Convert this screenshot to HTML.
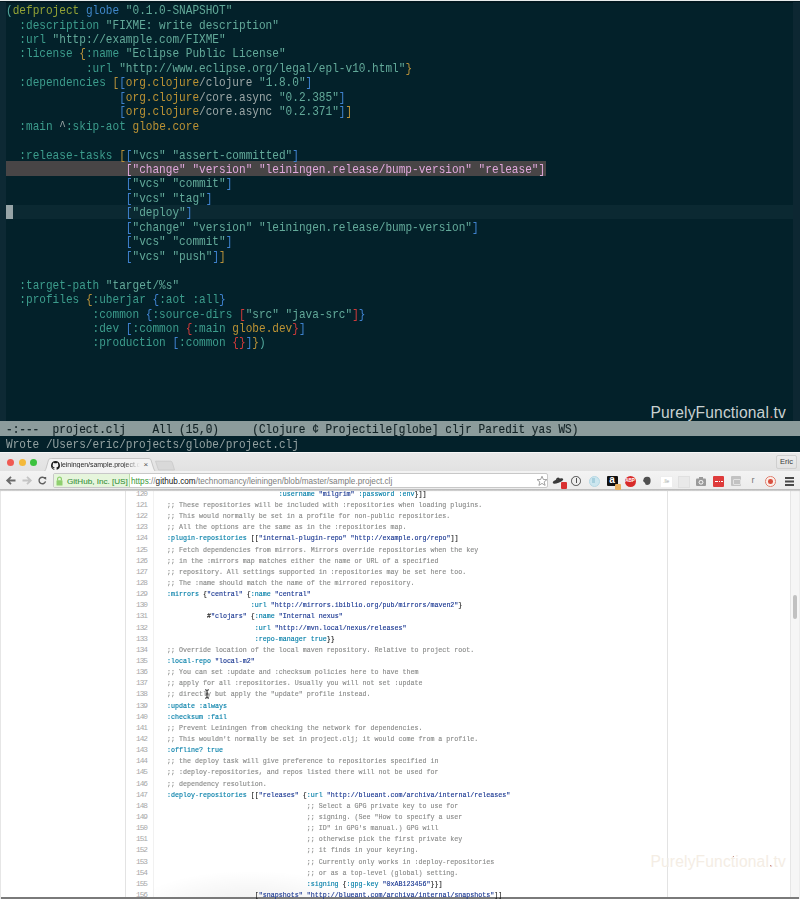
<!DOCTYPE html>
<html><head><meta charset="utf-8">
<style>
html,body{margin:0;padding:0;width:800px;height:899px;overflow:hidden;background:#fff;}
body{position:relative;font-family:"Liberation Sans",sans-serif;}
#wrap{position:absolute;left:0;top:0;width:800px;height:899px;overflow:hidden}
i{font-style:normal}
#emacs{position:absolute;left:0;top:0;width:800px;height:452px;background:#03212a;overflow:hidden}
#emacs .topw{position:absolute;left:0;top:0;width:800px;height:1px;background:#e8ecec}
#emacs .topd{position:absolute;left:0;top:1px;width:800px;height:1.5px;background:#021820}
#emacs .fl{position:absolute;left:0;top:2px;width:6.3px;height:419px;background:#0d2934}
#emacs .fr{position:absolute;left:793px;top:2px;width:7px;height:419px;background:#0d2732}
#emacs .hl{position:absolute;left:6px;top:161.2px;width:539.5px;height:14.5px;background:#484546}
#emacs .cl{position:absolute;left:6px;top:204.6px;width:787px;height:14.45px;background:#0b2932}
#emacs .cur{position:absolute;left:6px;top:204.6px;width:7px;height:14.45px;background:#97a4a7}
.el{position:absolute;left:6px;height:14.45px;line-height:14.45px;white-space:pre;font-family:"Liberation Mono",monospace;font-size:11.9px;color:#9fb0b0;margin-top:1.8px;transform:scaleX(0.9328);transform-origin:0 0}
.el .s{color:#62a999}.el .k{color:#3c9c8c}.el .d{color:#93a335}.el .g{color:#3f86c8}
.el .p1{color:#53a89c}.el .p2{color:#b8913a}.el .p3{color:#3f82cf}.el .p4{color:#cf3a3a}
.el .t{color:#9aa6a6}.el .o{color:#bb9234}.el .pk{color:#e0a8dc}
#modeline{position:absolute;left:0;top:421.25px;width:800px;height:15px;background:#8c9c9c;}
#modeline .txt{position:absolute;left:6px;top:1.4px;line-height:15px;white-space:pre;font-family:"Liberation Mono",monospace;font-size:11.9px;color:#132326;-webkit-text-stroke:0.15px currentColor;transform:scaleX(0.9328);transform-origin:0 0}
#mini{position:absolute;left:6px;top:437.5px;line-height:14.45px;white-space:pre;font-family:"Liberation Mono",monospace;font-size:11.9px;color:#93a1a1;transform:scaleX(0.9328);transform-origin:0 0}
#pf{position:absolute;left:650.5px;top:404px;font-family:"Liberation Sans",sans-serif;font-size:15.6px;color:#c9d1d1;letter-spacing:0.15px}

/* browser */
#chrome{position:absolute;left:0;top:451.5px;width:800px;height:39px;background:linear-gradient(#e9e9e9,#dadada);}
#toolbar{position:absolute;left:0;top:471.2px;width:800px;height:19.3px;background:linear-gradient(#f3f3f3,#ececec);border-bottom:1px solid #bdbdbd;box-sizing:border-box}
#page{position:absolute;left:0;top:490px;width:800px;height:409px;background:#fff;overflow:hidden}
.gn{position:absolute;left:125px;width:21.8px;text-align:right;height:11.14px;line-height:11.14px;font-family:"Liberation Mono",monospace;font-size:7.8px;color:#a8a8a8;letter-spacing:-1.1px}
.gl{position:absolute;left:167.3px;height:11.14px;line-height:11.14px;white-space:pre;font-family:"Liberation Mono",monospace;font-size:7.5px;color:#333;transform:scaleX(0.8867);transform-origin:0 0}
.gl{-webkit-text-stroke:0.15px currentColor}.gl .c{color:#8a8b8a}.gl .k{color:#007ea8}.gl .s{color:#183691}.gl .n{color:#222}

#chrome .ctop{position:absolute;left:0;top:0;width:800px;height:1px;background:#f7f7f7}
#chrome .tl{position:absolute;top:7px;width:7px;height:7px;border-radius:50%}
#chrome .ttl{position:absolute;left:60.5px;top:9px;width:79px;overflow:hidden;white-space:nowrap;font-size:7px;color:#2a2a2a;letter-spacing:-0.05px;-webkit-mask-image:linear-gradient(90deg,#000 80%,transparent)}
#chrome .tclose{position:absolute;left:143.5px;top:8.5px;font-size:8px;color:#555}
#chrome .eric{position:absolute;left:776px;top:3.2px;width:19px;height:12.5px;border:0.7px solid #cfcfcf;border-radius:2px;background:linear-gradient(#ececec,#e2e2e2);font-size:7.5px;color:#3a3a3a;text-align:center;line-height:12.5px}
#toolbar .addr{position:absolute;left:52.5px;top:2px;width:495px;height:15px;background:#fff;border:0.7px solid #c8c8c8;border-radius:2px;box-sizing:border-box}
#toolbar .ev{position:absolute;left:53.5px;top:3px;width:75px;height:13px;background:#e6f5dc;border-right:0.6px solid #b9dca6}
#toolbar .evt{position:absolute;left:67px;top:6px;font-size:8.1px;color:#3a923c;-webkit-text-stroke:0.1px currentColor;white-space:nowrap}
#toolbar .url{position:absolute;left:131px;top:5.4px;font-size:8.2px;white-space:nowrap;letter-spacing:0px}
#pageover{position:absolute;left:0;top:490px;width:800px;height:409px;pointer-events:none}
</style></head><body><div id="wrap">
<div id="emacs">
<div class="topw"></div><div class="topd"></div>
<div class="fl"></div><div class="fr"></div>
<div class="cl"></div>
<div class="hl"></div>
<div class="cur"></div>
<div class="el" style="top:2.30px"><i class="p1">(</i><i class="d">defproject</i><i class="t"> </i><i class="g">globe</i><i class="t"> </i><i class="s">&quot;0.1.0-SNAPSHOT&quot;</i></div>
<div class="el" style="top:16.75px"><i class="t">  </i><i class="k">:description</i><i class="t"> </i><i class="s">&quot;FIXME: write description&quot;</i></div>
<div class="el" style="top:31.20px"><i class="t">  </i><i class="k">:url</i><i class="t"> </i><i class="s">&quot;http://example.com/FIXME&quot;</i></div>
<div class="el" style="top:45.65px"><i class="t">  </i><i class="k">:license</i><i class="t"> </i><i class="p2">{</i><i class="k">:name</i><i class="t"> </i><i class="s">&quot;Eclipse Public License&quot;</i></div>
<div class="el" style="top:60.10px"><i class="t">            </i><i class="k">:url</i><i class="t"> </i><i class="s">&quot;http://www.eclipse.org/legal/epl-v10.html&quot;</i><i class="p2">}</i></div>
<div class="el" style="top:74.55px"><i class="t">  </i><i class="k">:dependencies</i><i class="t"> </i><i class="p2">[</i><i class="p3">[</i><i class="o">org.clojure</i><i class="t">/clojure </i><i class="s">&quot;1.8.0&quot;</i><i class="p3">]</i></div>
<div class="el" style="top:89.00px"><i class="t">                 </i><i class="p3">[</i><i class="o">org.clojure</i><i class="t">/core.async </i><i class="s">&quot;0.2.385&quot;</i><i class="p3">]</i></div>
<div class="el" style="top:103.45px"><i class="t">                 </i><i class="p3">[</i><i class="o">org.clojure</i><i class="t">/core.async </i><i class="s">&quot;0.2.371&quot;</i><i class="p3">]</i><i class="p2">]</i></div>
<div class="el" style="top:117.90px"><i class="t">  </i><i class="k">:main</i><i class="t"> ^</i><i class="k">:skip-aot</i><i class="t"> </i><i class="o">globe.core</i></div>
<div class="el" style="top:146.80px"><i class="t">  </i><i class="k">:release-tasks</i><i class="t"> </i><i class="p2">[</i><i class="p3">[</i><i class="s">&quot;vcs&quot;</i><i class="t"> </i><i class="s">&quot;assert-committed&quot;</i><i class="p3">]</i></div>
<div class="el" style="top:161.25px"><i class="t">                  </i><i class="pk">[&quot;change&quot; &quot;version&quot; &quot;leiningen.release/bump-version&quot; &quot;release&quot;]</i></div>
<div class="el" style="top:175.70px"><i class="t">                  </i><i class="p3">[</i><i class="s">&quot;vcs&quot;</i><i class="t"> </i><i class="s">&quot;commit&quot;</i><i class="p3">]</i></div>
<div class="el" style="top:190.15px"><i class="t">                  </i><i class="p3">[</i><i class="s">&quot;vcs&quot;</i><i class="t"> </i><i class="s">&quot;tag&quot;</i><i class="p3">]</i></div>
<div class="el" style="top:204.60px"><i class="t">                  </i><i class="p3">[</i><i class="s">&quot;deploy&quot;</i><i class="p3">]</i></div>
<div class="el" style="top:219.05px"><i class="t">                  </i><i class="p3">[</i><i class="s">&quot;change&quot;</i><i class="t"> </i><i class="s">&quot;version&quot;</i><i class="t"> </i><i class="s">&quot;leiningen.release/bump-version&quot;</i><i class="p3">]</i></div>
<div class="el" style="top:233.50px"><i class="t">                  </i><i class="p3">[</i><i class="s">&quot;vcs&quot;</i><i class="t"> </i><i class="s">&quot;commit&quot;</i><i class="p3">]</i></div>
<div class="el" style="top:247.95px"><i class="t">                  </i><i class="p3">[</i><i class="s">&quot;vcs&quot;</i><i class="t"> </i><i class="s">&quot;push&quot;</i><i class="p3">]</i><i class="p2">]</i></div>
<div class="el" style="top:276.85px"><i class="t">  </i><i class="k">:target-path</i><i class="t"> </i><i class="s">&quot;target/%s&quot;</i></div>
<div class="el" style="top:291.30px"><i class="t">  </i><i class="k">:profiles</i><i class="t"> </i><i class="p2">{</i><i class="k">:uberjar</i><i class="t"> </i><i class="p3">{</i><i class="k">:aot</i><i class="t"> </i><i class="k">:all</i><i class="p3">}</i></div>
<div class="el" style="top:305.75px"><i class="t">             </i><i class="k">:common</i><i class="t"> </i><i class="p3">{</i><i class="k">:source-dirs</i><i class="t"> </i><i class="p4">[</i><i class="s">&quot;src&quot;</i><i class="t"> </i><i class="s">&quot;java-src&quot;</i><i class="p4">]</i><i class="p3">}</i></div>
<div class="el" style="top:320.20px"><i class="t">             </i><i class="k">:dev</i><i class="t"> </i><i class="p3">[</i><i class="k">:common</i><i class="t"> </i><i class="p4">{</i><i class="k">:main</i><i class="t"> </i><i class="o">globe.dev</i><i class="p4">}</i><i class="p3">]</i></div>
<div class="el" style="top:334.65px"><i class="t">             </i><i class="k">:production</i><i class="t"> </i><i class="p3">[</i><i class="k">:common</i><i class="t"> </i><i class="p4">{}</i><i class="p3">]</i><i class="p2">}</i><i class="p1">)</i></div>
<div id="pf">PurelyFunctional<span style="color:#c8503a">.</span>tv</div>
</div>
<div id="modeline"><div class="txt">-:---  project.clj    All (15,0)     (Clojure ¢ Projectile[globe] cljr Paredit yas WS)</div></div>
<div id="mini">Wrote /Users/eric/projects/globe/project.clj</div>

<div id="page">
 <div style="position:absolute;left:124.5px;top:0;width:1px;height:409px;background:#e3e3e3"></div>
 <div style="position:absolute;left:153px;top:0;width:1px;height:409px;background:#f1f1f1"></div>
 <div style="position:absolute;left:666.8px;top:0;width:1px;height:409px;background:#e3e3e3"></div>
 <div style="position:absolute;left:790px;top:0;width:8.5px;height:409px;background:#f6f6f6;border-left:0.7px solid #e6e6e6;box-sizing:border-box"></div>
 <div style="position:absolute;left:792.7px;top:104.7px;width:4.3px;height:24.3px;background:#c1c1c1;border-radius:2.2px"></div>
 <div style="position:absolute;left:650.5px;top:363px;font-size:15.6px;color:#f4ede4;letter-spacing:0.15px">PurelyFunctional<span style="color:#e8c8c0">.</span>tv</div><div style="position:absolute;left:732.5px;top:365.5px;width:1.6px;height:1.6px;border-radius:50%;background:#b87a70"></div><div style="position:absolute;left:769.5px;top:374.5px;width:1.8px;height:1.8px;border-radius:50%;background:#b87a70"></div>
 <div style="position:absolute;left:130px;top:380px;width:240px;height:40px;background:radial-gradient(ellipse at 50% 100%,rgba(0,0,0,0.07),rgba(0,0,0,0) 70%)"></div>
 <div style="position:absolute;left:0;top:407.3px;width:800px;height:1.7px;background:#7a7a7a"></div>
 <div style="position:absolute;left:0;top:0;width:1px;height:409px;background:#e6e6e6"></div>
 <div style="position:absolute;left:798.5px;top:0;width:1.5px;height:409px;background:#ededed"></div>
</div>
<div id="gh">
<div class="gn" style="top:488.90px">120</div>
<div class="gl" style="top:488.90px"><i class="n">                            </i><i class="k">:username</i><i class="n"> </i><i class="s">&quot;milgrim&quot;</i><i class="n"> </i><i class="k">:password</i><i class="n"> </i><i class="k">:env</i><i class="n">}]]</i></div>
<div class="gn" style="top:500.04px">121</div>
<div class="gl" style="top:500.04px"><i class="c">;; These repositories will be included with :repositories when loading plugins.</i></div>
<div class="gn" style="top:511.18px">122</div>
<div class="gl" style="top:511.18px"><i class="c">;; This would normally be set in a profile for non-public repositories.</i></div>
<div class="gn" style="top:522.32px">123</div>
<div class="gl" style="top:522.32px"><i class="c">;; All the options are the same as in the :repositories map.</i></div>
<div class="gn" style="top:533.46px">124</div>
<div class="gl" style="top:533.46px"><i class="k">:plugin-repositories</i><i class="n"> [[</i><i class="s">&quot;internal-plugin-repo&quot;</i><i class="n"> </i><i class="s">&quot;http://example.org/repo&quot;</i><i class="n">]]</i></div>
<div class="gn" style="top:544.60px">125</div>
<div class="gl" style="top:544.60px"><i class="c">;; Fetch dependencies from mirrors. Mirrors override repositories when the key</i></div>
<div class="gn" style="top:555.74px">126</div>
<div class="gl" style="top:555.74px"><i class="c">;; in the :mirrors map matches either the name or URL of a specified</i></div>
<div class="gn" style="top:566.88px">127</div>
<div class="gl" style="top:566.88px"><i class="c">;; repository. All settings supported in :repositories may be set here too.</i></div>
<div class="gn" style="top:578.02px">128</div>
<div class="gl" style="top:578.02px"><i class="c">;; The :name should match the name of the mirrored repository.</i></div>
<div class="gn" style="top:589.16px">129</div>
<div class="gl" style="top:589.16px"><i class="k">:mirrors</i><i class="n"> {</i><i class="s">&quot;central&quot;</i><i class="n"> {</i><i class="k">:name</i><i class="n"> </i><i class="s">&quot;central&quot;</i></div>
<div class="gn" style="top:600.30px">130</div>
<div class="gl" style="top:600.30px"><i class="n">                     </i><i class="k">:url</i><i class="n"> </i><i class="s">&quot;http://mirrors.ibiblio.org/pub/mirrors/maven2&quot;</i><i class="n">}</i></div>
<div class="gn" style="top:611.44px">131</div>
<div class="gl" style="top:611.44px"><i class="n">          </i><i class="n">#</i><i class="s">&quot;clojars&quot;</i><i class="n"> {</i><i class="k">:name</i><i class="n"> </i><i class="s">&quot;Internal nexus&quot;</i></div>
<div class="gn" style="top:622.58px">132</div>
<div class="gl" style="top:622.58px"><i class="n">                      </i><i class="k">:url</i><i class="n"> </i><i class="s">&quot;http://mvn.local/nexus/releases&quot;</i></div>
<div class="gn" style="top:633.72px">133</div>
<div class="gl" style="top:633.72px"><i class="n">                      </i><i class="k">:repo-manager</i><i class="n"> </i><i class="k">true</i><i class="n">}}</i></div>
<div class="gn" style="top:644.86px">134</div>
<div class="gl" style="top:644.86px"><i class="c">;; Override location of the local maven repository. Relative to project root.</i></div>
<div class="gn" style="top:656.00px">135</div>
<div class="gl" style="top:656.00px"><i class="k">:local-repo</i><i class="n"> </i><i class="s">&quot;local-m2&quot;</i></div>
<div class="gn" style="top:667.14px">136</div>
<div class="gl" style="top:667.14px"><i class="c">;; You can set :update and :checksum policies here to have them</i></div>
<div class="gn" style="top:678.28px">137</div>
<div class="gl" style="top:678.28px"><i class="c">;; apply for all :repositories. Usually you will not set :update</i></div>
<div class="gn" style="top:689.42px">138</div>
<div class="gl" style="top:689.42px"><i class="c">;; directly but apply the &quot;update&quot; profile instead.</i></div>
<div class="gn" style="top:700.56px">139</div>
<div class="gl" style="top:700.56px"><i class="k">:update</i><i class="n"> </i><i class="k">:always</i></div>
<div class="gn" style="top:711.70px">140</div>
<div class="gl" style="top:711.70px"><i class="k">:checksum</i><i class="n"> </i><i class="k">:fail</i></div>
<div class="gn" style="top:722.84px">141</div>
<div class="gl" style="top:722.84px"><i class="c">;; Prevent Leiningen from checking the network for dependencies.</i></div>
<div class="gn" style="top:733.98px">142</div>
<div class="gl" style="top:733.98px"><i class="c">;; This wouldn&#x27;t normally be set in project.clj; it would come from a profile.</i></div>
<div class="gn" style="top:745.12px">143</div>
<div class="gl" style="top:745.12px"><i class="k">:offline?</i><i class="n"> </i><i class="k">true</i></div>
<div class="gn" style="top:756.26px">144</div>
<div class="gl" style="top:756.26px"><i class="c">;; the deploy task will give preference to repositories specified in</i></div>
<div class="gn" style="top:767.40px">145</div>
<div class="gl" style="top:767.40px"><i class="c">;; :deploy-repositories, and repos listed there will not be used for</i></div>
<div class="gn" style="top:778.54px">146</div>
<div class="gl" style="top:778.54px"><i class="c">;; dependency resolution.</i></div>
<div class="gn" style="top:789.68px">147</div>
<div class="gl" style="top:789.68px"><i class="k">:deploy-repositories</i><i class="n"> [[</i><i class="s">&quot;releases&quot;</i><i class="n"> {</i><i class="k">:url</i><i class="n"> </i><i class="s">&quot;http://blueant.com/archiva/internal/releases&quot;</i></div>
<div class="gn" style="top:800.82px">148</div>
<div class="gl" style="top:800.82px"><i class="n">                                   </i><i class="c">;; Select a GPG private key to use for</i></div>
<div class="gn" style="top:811.96px">149</div>
<div class="gl" style="top:811.96px"><i class="n">                                   </i><i class="c">;; signing. (See &quot;How to specify a user</i></div>
<div class="gn" style="top:823.10px">150</div>
<div class="gl" style="top:823.10px"><i class="n">                                   </i><i class="c">;; ID&quot; in GPG&#x27;s manual.) GPG will</i></div>
<div class="gn" style="top:834.24px">151</div>
<div class="gl" style="top:834.24px"><i class="n">                                   </i><i class="c">;; otherwise pick the first private key</i></div>
<div class="gn" style="top:845.38px">152</div>
<div class="gl" style="top:845.38px"><i class="n">                                   </i><i class="c">;; it finds in your keyring.</i></div>
<div class="gn" style="top:856.52px">153</div>
<div class="gl" style="top:856.52px"><i class="n">                                   </i><i class="c">;; Currently only works in :deploy-repositories</i></div>
<div class="gn" style="top:867.66px">154</div>
<div class="gl" style="top:867.66px"><i class="n">                                   </i><i class="c">;; or as a top-level (global) setting.</i></div>
<div class="gn" style="top:878.80px">155</div>
<div class="gl" style="top:878.80px"><i class="n">                                   </i><i class="k">:signing</i><i class="n"> {</i><i class="k">:gpg-key</i><i class="n"> </i><i class="s">&quot;0xAB123456&quot;</i><i class="n">}}]</i></div>
<div class="gn" style="top:889.94px">156</div>
<div class="gl" style="top:889.94px"><i class="n">                      </i><i class="n">[</i><i class="s">&quot;snapshots&quot;</i><i class="n"> </i><i class="s">&quot;http://blueant.com/archiva/internal/snapshots&quot;</i><i class="n">]]</i></div>
</div>
<svg style="position:absolute;left:204px;top:688.5px" width="6" height="10" viewBox="0 0 6 10"><path d="M1,0.8 Q3,0.8 3,2 V8 Q3,9.2 1,9.2 M5,0.8 Q3,0.8 3,2 M5,9.2 Q3,9.2 3,8 M1.8,5 H4.2" fill="none" stroke="#303030" stroke-width="1.1"/></svg>
<div id="chrome">
 <div class="ctop"></div>
 <div class="tl" style="left:7.2px;background:#f05a52"></div>
 <div class="tl" style="left:18.5px;background:#f4b93a"></div>
 <div class="tl" style="left:29.5px;background:#3cc23e"></div>
 <svg class="tab" width="800" height="20" style="position:absolute;left:0;top:6px">
  <path d="M41,14.5 C44,14.5 45.5,13 46.5,9 L48.5,2 C49,0.8 50,0.5 51.5,0.5 L148,0.5 C149.5,0.5 150.5,0.8 151,2 L153.5,10 C154.5,13 155.5,14.5 159,14.5 Z" fill="#f3f3f3" stroke="#bdbdbd" stroke-width="0.8"/>
  <path d="M155.5,3.2 L170.5,3.2 C171.5,3.2 172,3.6 172.3,4.5 L174.5,12 L158.5,12 Z" fill="#d9d9d9" stroke="#c6c6c6" stroke-width="0.7"/>
 </svg>
 <svg style="position:absolute;left:50.5px;top:9px" width="9" height="9" viewBox="0 0 16 16"><path fill="#1b1b1b" d="M8 0C3.58 0 0 3.58 0 8c0 3.54 2.29 6.53 5.47 7.59.4.07.55-.17.55-.38 0-.19-.01-.82-.01-1.49-2.01.37-2.53-.49-2.69-.94-.09-.23-.48-.94-.82-1.13-.28-.15-.68-.52-.01-.53.63-.01 1.08.58 1.23.82.72 1.21 1.87.87 2.33.66.07-.52.28-.87.51-1.07-1.78-.2-3.640-.89-3.64-3.95 0-.87.31-1.59.82-2.15-.08-.2-.36-1.02.08-2.120 0 0 .67-.21 2.2.82.64-.18 1.32-.27 2-.27.68 0 1.36.09 2 .27 1.53-1.04 2.2-.82 2.2-.82.44 1.1.16 1.92.08 2.12.51.56.82 1.27.82 2.15 0 3.07-1.87 3.75-3.65 3.95.29.25.54.73.54 1.48 0 1.07-.01 1.93-.01 2.2 0 .21.15.46.55.38A8.013 8.013 0 0016 8c0-4.42-3.58-8-8-8z"/></svg>
 <div class="ttl">leiningen/sample.project.clj</div>
 <div class="tclose">×</div>
 <div class="eric">Eric</div>
</div>
<div id="toolbar">
 <svg style="position:absolute;left:5px;top:4px" width="12" height="11" viewBox="0 0 12 11"><path d="M10.5,5.5 H2.5 M6,1.8 L2.2,5.5 L6,9.2" fill="none" stroke="#6a6a6a" stroke-width="1.8"/></svg>
 <svg style="position:absolute;left:21px;top:4px" width="12" height="11" viewBox="0 0 12 11"><path d="M1.5,5.5 H9.5 M6,1.8 L9.8,5.5 L6,9.2" fill="none" stroke="#c4c4c4" stroke-width="1.8"/></svg>
 <svg style="position:absolute;left:37.5px;top:5px" width="9" height="9" viewBox="0 0 11 11"><path d="M8.6,3.2 A4,4 0 1 0 9.2,6.5" fill="none" stroke="#606060" stroke-width="1.7"/><path d="M6.2,1.2 L10,1.2 L10,5 Z" fill="#606060"/></svg>
 <div class="addr"></div>
 <div class="ev"></div>
 <svg style="position:absolute;left:56px;top:4.5px" width="7" height="10" viewBox="0 0 7 10"><path d="M1.6,4.5 V3 A1.9,1.9 0 0 1 5.4,3 V4.5" fill="none" stroke="#8fcf6f" stroke-width="1.2"/><rect x="0.5" y="4.3" width="6" height="5.2" rx="0.6" fill="#8fcf6f"/></svg>
 <div class="evt">GitHub, Inc. [US]</div>
 <div class="url"><span style="color:#3a9a3a">https</span><span style="color:#8a8a8a">://</span><span style="color:#202020">github.com</span><span style="color:#7c7c7c">/technomancy/leiningen/blob/master/sample.project.clj</span></div>
 <svg style="position:absolute;left:535.5px;top:3.5px" width="12" height="12" viewBox="0 0 24 24"><path d="M12,2.5 L14.8,9 L21.8,9.3 L16.3,13.8 L18.2,20.8 L12,16.8 L5.8,20.8 L7.7,13.8 L2.2,9.3 L9.2,9 Z" fill="#fff" stroke="#8a8a8a" stroke-width="1.6" stroke-linejoin="round"/></svg>
 <svg style="position:absolute;left:552px;top:4px" width="12" height="10" viewBox="0 0 12 10"><ellipse cx="6" cy="6" rx="5.5" ry="1.8" fill="#3a3a3a" transform="rotate(-20 6 6)"/><path d="M3.5,5.5 Q5,0.5 8,3.5" fill="#3a3a3a"/></svg>
 <div style="position:absolute;left:560.5px;top:11px;width:6.5px;height:7px;background:#d93030;border-radius:1px"></div>
 <div style="position:absolute;left:571.3px;top:4.8px;width:7.6px;height:7.6px;border:1.5px solid #505050;border-radius:50%"></div>
 <div style="position:absolute;left:575.5px;top:6.8px;width:1.6px;height:5px;background:#505050"></div>
 <div style="position:absolute;left:589.3px;top:5px;width:9px;height:9px;border-radius:50%;background:#cce6ef;border:0.5px solid #b5d8e4"></div><div style="position:absolute;left:592.3px;top:7px;width:3px;height:5px;background:#a8d0de"></div>
 <div style="position:absolute;left:607px;top:5px;width:10.5px;height:10px;background:#111;border-radius:1px"></div>
 <div style="position:absolute;left:609.3px;top:3.2px;font:bold 10px 'Liberation Sans',sans-serif;color:#fff">a</div>
 <div style="position:absolute;left:614.5px;top:13px;width:6px;height:5.5px;background:#e8b060;border-radius:1px"></div>
 <div style="position:absolute;left:624.5px;top:4.5px;width:11px;height:11px;border-radius:50%;background:#d82a2a"></div>
 <div style="position:absolute;left:624.5px;top:7.2px;width:11px;text-align:center;font:bold 4.6px 'Liberation Sans',sans-serif;color:#fff">ABP</div>
 <svg style="position:absolute;left:642px;top:5px" width="10" height="10" viewBox="0 0 10 10"><path d="M2,2 Q4,0 7,1 Q9,2 8.5,6 Q8,9 5,9 Q3,9 3,7 L1,5 Z" fill="#505050"/></svg>
 <div style="position:absolute;left:659.5px;top:5px;width:11px;height:10px;background:#fff;border:0.5px solid #eee"></div>
 <div style="position:absolute;left:663px;top:6.5px;font:5px 'Liberation Sans',sans-serif;color:#aaa">.lle</div>
 <div style="position:absolute;left:677.5px;top:5px;width:10px;height:10px;background:#e9e9e9;border:0.6px solid #e0e0e0"></div>
 <svg style="position:absolute;left:694.5px;top:4.5px" width="12" height="11" viewBox="0 0 12 11"><rect x="1" y="2.5" width="10" height="7.5" rx="1" fill="#9a9a9a"/><rect x="4" y="1" width="4" height="2" fill="#9a9a9a"/><circle cx="6" cy="6.3" r="2.4" fill="#eee"/><circle cx="6" cy="6.3" r="1.3" fill="#9a9a9a"/></svg>
 <div style="position:absolute;left:713px;top:5px;width:10.5px;height:10.5px;background:#de3b3b;border-radius:1px"></div>
 <div style="position:absolute;left:715px;top:9.5px;width:6.5px;height:1.6px;border-left:1.6px dotted #fff;background:repeating-linear-gradient(90deg,#fff 0 1.6px,transparent 1.6px 2.6px)"></div>
 <div style="position:absolute;left:730.5px;top:5px;width:10px;height:10px;background:#c2c2c2;border-radius:1px"></div>
 <div style="position:absolute;left:732.5px;top:7.5px;width:6px;height:4px;border:1px solid #e2e2e2;border-radius:1px"></div>
 <div style="position:absolute;left:751.5px;top:3.5px;font:9px 'Liberation Sans',sans-serif;color:#777">r</div>
 <div style="position:absolute;left:765.3px;top:4.8px;width:8.6px;height:8.6px;border-radius:50%;border:1.1px solid #e08070;background:#fbeee8"></div>
 <div style="position:absolute;left:768.4px;top:7.9px;width:4.6px;height:4.6px;border-radius:50%;background:#d85040"></div>
 <div style="position:absolute;left:785px;top:5.5px;width:8.5px;height:2px;background:#4a4a4a;box-shadow:0 3.5px 0 #4a4a4a,0 7px 0 #4a4a4a"></div>
</div>
<div id="pageover">
 <div style="position:absolute;left:0;top:0;width:800px;height:2px;background:linear-gradient(rgba(0,0,0,0.08),rgba(0,0,0,0))"></div>
</div>
</div></body></html>
